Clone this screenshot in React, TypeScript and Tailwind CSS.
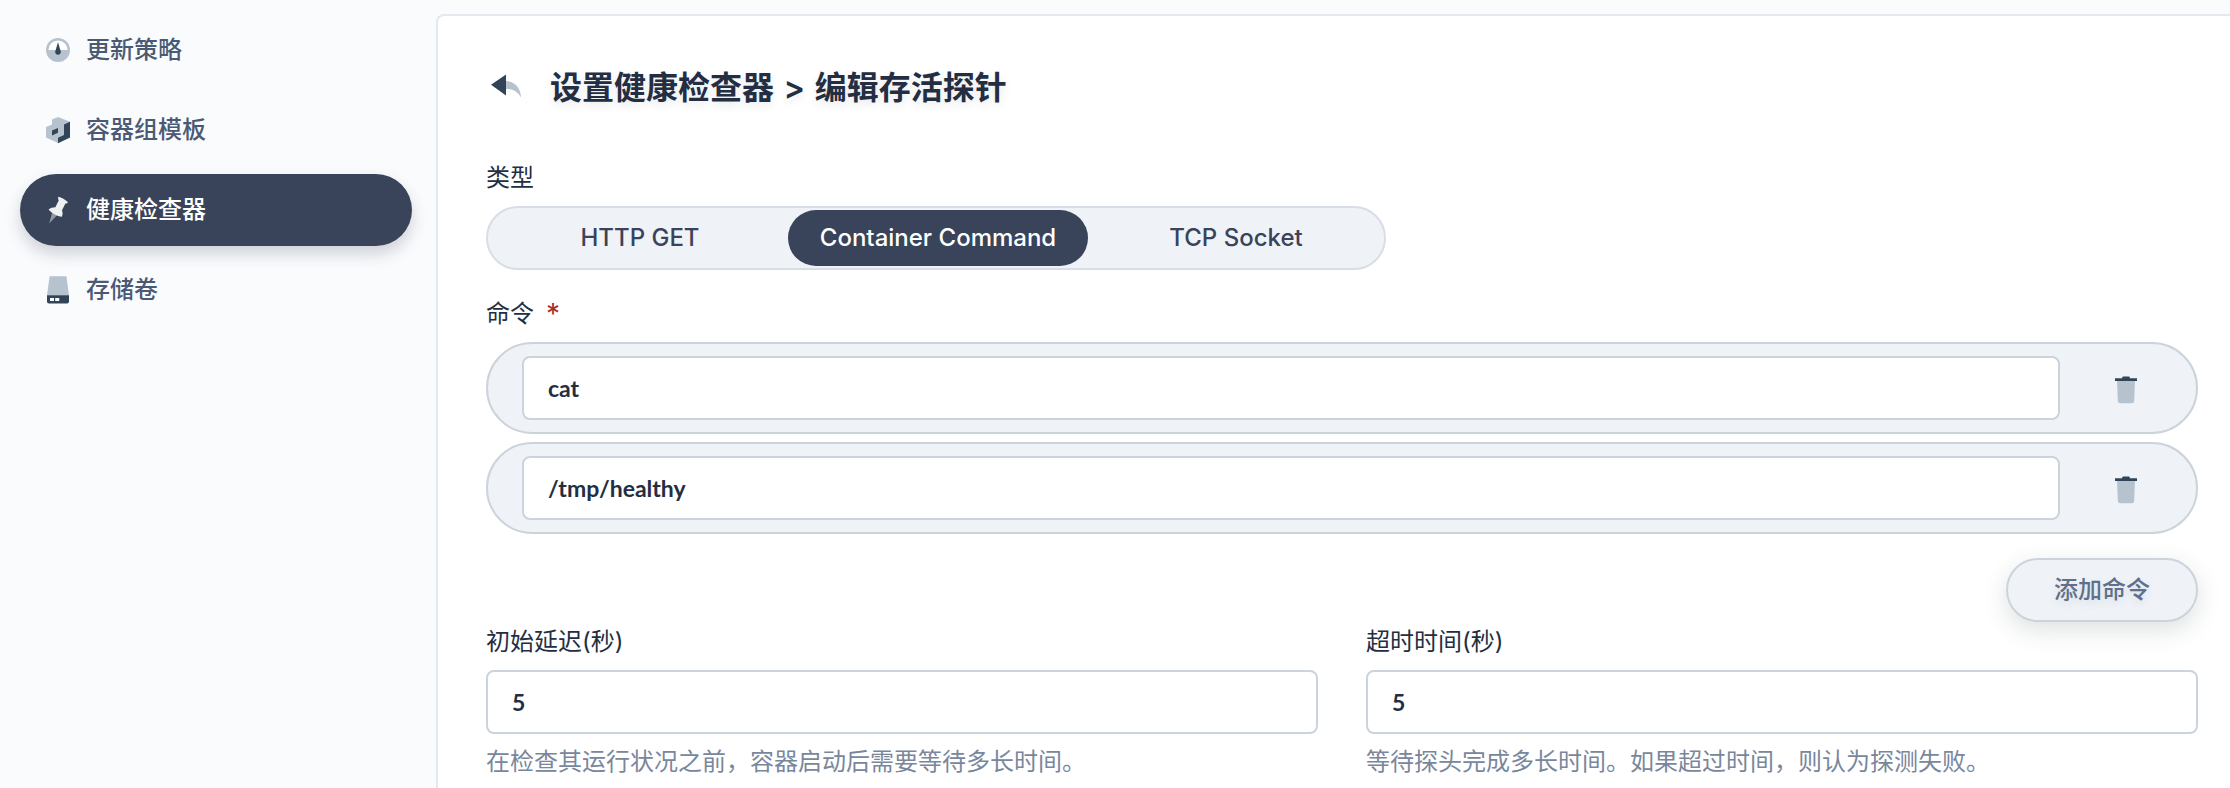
import type { ReactNode } from "react";

const DARK = "#324558";
const LIGHT = "#b6c2cd";

function GaugeIcon() {
  return (
    <svg className="h-7 w-7" viewBox="0 0 28 28">
      <circle cx="14" cy="14" r="12" fill={LIGHT} />
      <path d="M4.4 14a9.6 9.6 0 0 1 19.2 0z" fill="#fff" />
      <path d="M14 6.2L16.7 15.2a2.8 2.8 0 1 1-5.4 0z" fill={DARK} />
    </svg>
  );
}

function PodIcon() {
  return (
    <svg className="h-7 w-7" viewBox="0 0 28 28">
      <path d="M14 1L26 5.7V21.5L14 27L2 21.5V11L8 8.4V3.4z" fill={LIGHT} />
      <path d="M8 14.6L14 12V16.8L8 19.4z" fill={DARK} />
      <path d="M20 8.6L26 5.8V21.6L14 27.2V21.8L20 19z" fill={DARK} />
    </svg>
  );
}

function PinIcon() {
  return (
    <svg className="h-7 w-7" viewBox="0 0 28 28">
      <path d="M8.2 16.4L13 19.2L5.2 27.5z" fill="#fff" opacity="0.45" />
      <path
        d="M14.4 0.8C15.6 0.6 23 4.6 23.8 6.2C23.4 7.4 22.4 7.6 21.4 7.5L18 14.2C18.8 16.4 18.8 18.6 17.8 20.8C13.6 20.2 7 16.8 4.6 13.4C6.4 12 8.6 11.2 11.4 11.2L14.8 4.2C14.2 3.4 13.8 2.2 14.4 0.8z"
        fill="#fff"
        opacity="0.92"
      />
    </svg>
  );
}

function StorageIcon() {
  return (
    <svg className="h-7 w-7" viewBox="0 0 28 28">
      <path d="M5.6 0.2H22.4L25 19.6H3z" fill={LIGHT} />
      <path d="M3 19.2H25V25.4a2 2 0 0 1-2 2H5a2 2 0 0 1-2-2z" fill={DARK} />
      <path d="M6 22H10V25H6zM11.2 22H15.2V25H11.2z" fill="#fff" />
    </svg>
  );
}

function BackIcon() {
  return (
    <svg className="mt-1 h-8 w-8" viewBox="0 0 32 32">
      <path d="M15 7C25 6.6 30.8 14.4 31 23.4C28 17.8 22.4 14.6 15 15z" fill={LIGHT} />
      <path d="M1 10.8L16 0.4V21.4z" fill={DARK} />
    </svg>
  );
}

function TrashIcon() {
  return (
    <svg className="h-7 w-[22px]" viewBox="0 0 22 28">
      <path d="M2 4H20L19.2 24.8a2.6 2.6 0 0 1-2.6 2.5H5.4a2.6 2.6 0 0 1-2.6-2.5z" fill={LIGHT} />
      <path d="M0 2.2H7.2V1.4a1 1 0 0 1 1-.8h5.6a1 1 0 0 1 1 .8V2.2H22V5H0z" fill={DARK} />
    </svg>
  );
}

function NavItem({ icon, label, active = false }: { icon: ReactNode; label: string; active?: boolean }) {
  return (
    <a
      className={
        active
          ? "flex h-[72px] items-center gap-[14px] rounded-full bg-[#39435a] px-6 text-white shadow-[0_8px_16px_0_rgba(36,46,66,0.2)]"
          : "flex h-[72px] items-center gap-[14px] rounded-full px-6 text-[#4a5974]"
      }
    >
      {icon}
      <span className="text-2xl font-medium">{label}</span>
    </a>
  );
}

function TypeTab({ label, active = false }: { label: string; active?: boolean }) {
  return (
    <button
      className={
        active
          ? "h-14 w-[300px] rounded-full bg-[#39435a] text-2xl font-medium text-white"
          : "h-14 flex-1 rounded-full text-2xl font-medium text-[#39435a]"
      }
    >
      {label}
    </button>
  );
}

function Label({ children }: { children: ReactNode }) {
  return <div className="flex h-10 items-center text-2xl text-[#242e42]">{children}</div>;
}

function TextBox({ value }: { value: string }) {
  return (
    <div className="flex h-16 w-full items-center rounded-lg border-2 border-[#ccd3db] bg-white px-6 font-[Lato] text-[23px] font-bold text-[#242e42]">
      {value}
    </div>
  );
}

function CommandRow({ value }: { value: string }) {
  return (
    <div className="flex h-[92px] items-center rounded-full border-2 border-[#ccd3db] bg-[#eff3f8] pl-[34px]">
      <div className="w-[1538px]">
        <TextBox value={value} />
      </div>
      <button className="ml-[55px] pt-1">
        <TrashIcon />
      </button>
    </div>
  );
}

function Field({ label, value, help }: { label: string; value: string; help: string }) {
  return (
    <div className="flex-1">
      <Label>{label}</Label>
      <div className="mt-2">
        <TextBox value={value} />
      </div>
      <p className="mt-2 flex h-10 items-center text-2xl text-[#79879c]">{help}</p>
    </div>
  );
}

export default function App() {
  return (
    <div className="flex h-[788px] overflow-hidden bg-[#fafbfd] font-[Inter,'Noto_Sans_CJK_SC',sans-serif]">
      <nav className="flex w-[436px] shrink-0 flex-col gap-2 pt-[14px] pr-6 pl-5">
        <NavItem icon={<GaugeIcon />} label="更新策略" />
        <NavItem icon={<PodIcon />} label="容器组模板" />
        <NavItem icon={<PinIcon />} label="健康检查器" active />
        <NavItem icon={<StorageIcon />} label="存储卷" />
      </nav>
      <main className="mt-[14px] h-[900px] flex-1 rounded-tl-lg border-t-2 border-l-2 border-[#e3e9ef] bg-white pt-12 pr-8 pl-12">
        <header className="flex h-12 items-center gap-7 pl-1">
          <BackIcon />
          <h1 className="text-[32px] font-semibold text-[#242e42] [text-shadow:0_4px_8px_rgba(36,46,66,0.1)] [word-spacing:1.5px]">
            设置健康检查器 &gt; 编辑存活探针
          </h1>
        </header>
        <div className="mt-[46px]">
          <Label>类型</Label>
          <div className="mt-2 flex h-16 w-[900px] items-center rounded-full border-2 border-[#d8dee5] bg-[#eff3f8]">
            <div className="flex flex-1 pl-1">
              <TypeTab label="HTTP GET" />
            </div>
            <TypeTab label="Container Command" active />
            <div className="flex w-[296px]">
              <TypeTab label="TCP Socket" />
            </div>
          </div>
        </div>
        <div className="mt-6">
          <Label>
            命令<span className="ml-3 text-[28px] leading-none text-[#ab2f29]">*</span>
          </Label>
          <div className="mt-2 flex flex-col gap-2">
            <CommandRow value="cat" />
            <CommandRow value="/tmp/healthy" />
          </div>
          <div className="mt-6 flex justify-end">
            <button className="h-16 w-48 rounded-full border-2 border-[#ccd3db] bg-[#eff3f8] text-2xl font-medium text-[#5f708a] shadow-[0_8px_24px_0_rgba(35,45,55,0.15)] [text-shadow:0_4px_8px_rgba(36,46,66,0.1)]">
              添加命令
            </button>
          </div>
        </div>
        <div className="flex gap-12">
          <Field label="初始延迟(秒)" value="5" help="在检查其运行状况之前，容器启动后需要等待多长时间。" />
          <Field label="超时时间(秒)" value="5" help="等待探头完成多长时间。如果超过时间，则认为探测失败。" />
        </div>
      </main>
    </div>
  );
}
